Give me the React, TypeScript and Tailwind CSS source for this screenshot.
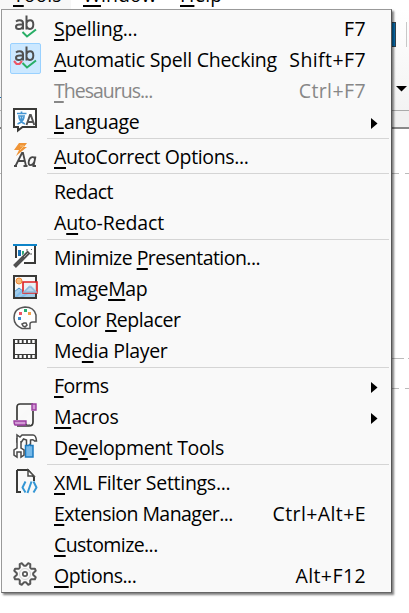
import React from "react";

type Item = {
  pre?: string;
  key?: string;
  post?: string;
  shortcut?: string;
  sub?: boolean;
  disabled?: boolean;
  active?: boolean;
  icon?: React.ReactNode;
  track: string;
};

function Icon({ children }: { children: React.ReactNode }) {
  return (
    <svg width="24" height="24" viewBox="0 0 24 24" fill="none" className="block overflow-visible">
      {children}
    </svg>
  );
}

const Ab = ({ wavy }: { wavy?: boolean }) => (
  <Icon>
    <g stroke="#505050" strokeWidth="2">
      <path d="M3 6.5q1.500-1.200 3.700-1.200 3.300 0 3.300 3V14.500M10 9.500H7q-4 0-4 2.300 0 2.200 2.600 2.200 4.400 0 4.400-3.800" />
      <path d="M13.500 .5v14M13.500 8q1-2.700 3.600-2.700 3.200 0 3.200 4.300t-3.300 4.400Q14.500 14 13.500 11" />
    </g>
    {wavy && <path d="M1 15l2.500 3h3L9 15" stroke="#ed5565" strokeWidth="2" />}
    <path d="M9.500 17l4.500 4.500 9-7" stroke="#28ae66" strokeWidth="2" />
  </Icon>
);

const Language = () => (
  <Icon>
    <path d="M1 1h22v18H9.500L5 22.500V19H1z" fill="#fff" stroke="#3a3a38" strokeWidth="2" />
    <path d="M4 5.500h9.500M8.500 3.500v2M5 8h7M6 9q1 5 6 7M11 9q-1 5-6.500 7M8.500 8v7" stroke="#4595d1" strokeWidth="1.700" />
    <path d="M13.500 17l3.500-10h.8l3.500 10M14.500 14h6" stroke="#555" strokeWidth="2" />
  </Icon>
);

const AutoCorrect = () => (
  <Icon>
    <path d="M6 0h8l-3 4h3L3 13l3-6H1z" fill="#ef9437" />
    <path d="M7 3h4L7 7" stroke="#fac27b" />
    <path d="M1 23h3M2.500 23L9 10h1l3 13M5 18h7M10.500 23h4" stroke="#484848" strokeWidth="1.800" />
    <path d="M22.500 13.500L20.500 23h2.500M21.700 15q-1-1-2.500-.8-2.700.5-3.400 4-.7 4 1.700 4 2.500 0 3.700-3" stroke="#484848" strokeWidth="1.800" />
  </Icon>
);

const Presentation = () => (
  <Icon>
    <path d="M2 2h20v17H2z" fill="#fff" />
    <path d="M3 14V2M22 2v17H11" stroke="#3a3a38" strokeWidth="2" />
    <path d="M0 0h24v2H0z" fill="#0e84c8" />
    <path d="M5 6h3v6H5z" fill="#1871b7" />
    <path d="M9 7h2v4H9z" fill="#30a878" />
    <path d="M14 5l1 1-1 1-1-1zM18 9l1 1-1 1-1-1zM18 5h1v1h-1z" fill="#555" />
    <path d="M16 8L1.500 22.500" stroke="#fafafa" strokeWidth="5" />
    <path d="M16 8L1.500 22.500" stroke="#505050" strokeWidth="4" />
    <path d="M15 9l-4 4" stroke="#aaa" />
  </Icon>
);

const ImageMap = () => (
  <Icon>
    <path d="M1 1h22v22H1z" fill="#fafafa" />
    <circle cx="6" cy="6" r="3" fill="#f6bc7d" stroke="#ed8733" />
    <path d="M1 17l5-4 5 4 6-7 6 5v8H1z" fill="#a1cdec" stroke="#438fc8" />
    <path d="M2 23l8-8M7 23L23 13v10z" stroke="#83beec" strokeWidth="2" />
    <path d="M1 1h22v22H1z" stroke="#3a3a38" strokeWidth="2" />
    <path d="M10 7h14v11H10z" fill="#e8eef2" fillOpacity=".85" stroke="#df2020" strokeWidth="1.600" />
    <path d="M11 17l5-5h2l5 5z" fill="#b9d6ea" stroke="#8ebbdc" strokeWidth="1.500" />
  </Icon>
);

const Palette = () => (
  <Icon>
    <path d="M17 22.500V18q0-2 3-2h3V9Q21 1 12 1 1 2 1 12q0 7 8 10.500z" fill="#fff" stroke="#555" strokeWidth="1.500" />
    <path d="M11 3h3v3h-3z" fill="#28ae72" />
    <path d="M6 6h3v3H6z" fill="#ed5565" />
    <path d="M15 6h3v3h-3z" fill="#f5a14c" />
    <path d="M5 11h3v3H5z" fill="#388bce" />
    <path d="M10 20l-1-2 2-1h2l1 2-2 2z" stroke="#555" strokeWidth="1.500" />
  </Icon>
);

const Film = () => (
  <Icon>
    <path d="M0 2h24v20H0z" fill="#3a3a38" />
    <path d="M2 7h20v10H2z" fill="#fafafa" />
    <path d="M2 4.500h20M2 19.500h20" stroke="#fff" strokeWidth="3" strokeDasharray="2.500 1.800" />
  </Icon>
);

const Macro = () => (
  <Icon>
    <path d="M4 17V4q0-3 3-3h13M20 8v11q0 4-4 4H4" fill="#fafafa" stroke="#3a3a38" strokeWidth="1.700" />
    <path d="M19 1h4v6h-4zM1 18h12v4H2q-1-1-1-4z" fill="#d29ad5" stroke="#9a3ca0" strokeWidth="1.400" />
    <path d="M13 21q1 2 4 1" stroke="#555" strokeWidth="1.500" />
  </Icon>
);

const Tools = () => (
  <Icon>
    <path d="M4 4V1l3 2 2-2h11q3 0 3.500 6h-2q-1-2-4-1v6h-4V6l-3-1-2 3H4z" fill="#fff" stroke="#4a4a4a" strokeWidth="1.500" />
    <path d="M12.500 11.500h3l1-1 1 1H20V23h-7.500z" fill="#76b9e9" stroke="#1c7bc1" strokeWidth="1.500" />
    <path d="M4 4v10l-3 2v5l3 2v-5h4v5l3-2v-5l-3-2V7" fill="#fff" stroke="#4a4a4a" strokeWidth="1.500" />
  </Icon>
);

const Xml = () => (
  <Icon>
    <path d="M4 1h11l6 7v4M4 1v22h4" stroke="#3a3a38" strokeWidth="2" />
    <path d="M15 1v6h6z" fill="#fff" stroke="#4b4b49" strokeWidth="1.500" />
    <path d="M12.500 12.500l-3 6 3 5M20.500 12.500l3 6-3 5M18.500 12.500L14.500 24" stroke="#3597d5" strokeWidth="2" strokeLinejoin="round" />
  </Icon>
);

const teeth = Array.from({ length: 32 }, (_, i) => {
  const angle = ((i * 11.25 + 5.6) * Math.PI) / 180;
  const radius = i % 4 === 1 || i % 4 === 2 ? 11.2 : 8.2;
  return `${(12 + radius * Math.sin(angle)).toFixed(2)} ${(12 - radius * Math.cos(angle)).toFixed(2)}`;
});

const Gear = () => (
  <Icon>
    <path d={`M${teeth.join("L")}z`} stroke="#585858" strokeWidth="2" strokeLinejoin="round" />
    <circle cx="12" cy="12" r="5.500" stroke="#d4d4d4" />
    <circle cx="12" cy="12" r="2.200" stroke="#585858" strokeWidth="1.700" />
  </Icon>
);

const groups: Item[][] = [
  [
    { key: "S", post: "pelling...", shortcut: "F7", icon: <Ab />, track: "tracking-[-0.27px]" },
    { key: "A", post: "utomatic Spell Checking", shortcut: "Shift+F7", active: true, icon: <Ab wavy />, track: "tracking-[-0.25px]" },
    { key: "T", post: "hesaurus...", shortcut: "Ctrl+F7", disabled: true, track: "tracking-[-1px]" },
    { key: "L", post: "anguage", sub: true, icon: <Language />, track: "tracking-[-0.3px]" },
  ],
  [{ key: "A", post: "utoCorrect Options...", icon: <AutoCorrect />, track: "tracking-[-0.37px]" }],
  [
    { pre: "Redact", track: "tracking-[-0.5px]" },
    { pre: "A", key: "u", post: "to-Redact", track: "tracking-[-0.1px]" },
  ],
  [
    { pre: "Minimize ", key: "P", post: "resentation...", icon: <Presentation />, track: "tracking-[-0.54px]" },
    { pre: "Image", key: "M", post: "ap", icon: <ImageMap />, track: "tracking-[-0.35px]" },
    { pre: "Color ", key: "R", post: "eplacer", icon: <Palette />, track: "tracking-[-0.43px]" },
    { pre: "Me", key: "d", post: "ia Player", icon: <Film />, track: "tracking-[-0.33px]" },
  ],
  [
    { key: "F", post: "orms", sub: true, track: "tracking-[-0.5px]" },
    { key: "M", post: "acros", sub: true, icon: <Macro />, track: "tracking-[-0.4px]" },
    { pre: "De", key: "v", post: "elopment Tools", icon: <Tools />, track: "tracking-[-0.35px]" },
  ],
  [
    { key: "X", post: "ML Filter Settings...", icon: <Xml />, track: "tracking-[-0.28px]" },
    { key: "E", post: "xtension Manager...", shortcut: "Ctrl+Alt+E", track: "tracking-[-0.55px]" },
    { key: "C", post: "ustomize...", track: "tracking-[-0.58px]" },
    { key: "O", post: "ptions...", shortcut: "Alt+F12", icon: <Gear />, track: "tracking-[-0.5px]" },
  ],
];

function Key({ children }: { children?: React.ReactNode }) {
  return <span className="underline decoration-2 underline-offset-[3px] [text-decoration-skip-ink:none]">{children}</span>;
}

function Row({ item }: { item: Item }) {
  return (
    <div className={`flex h-[31px] items-start ${item.disabled ? "text-[#878787]" : "text-black"}`}>
      <div className="flex w-[52px] shrink-0 pl-2">
        {item.icon && (
          <div
            className={`-mt-[2px] flex size-[31px] items-start rounded-[2px] border pl-[2px] pt-[2px] ${
              item.active ? "border-[#99d1ff] bg-[#cce8ff]" : "border-transparent"
            }`}
          >
            {item.icon}
          </div>
        )}
      </div>
      <div className={`whitespace-pre leading-[29px] ${item.track}`}>
        {item.pre}
        <Key>{item.key}</Key>
        {item.post}
      </div>
      {item.shortcut && (
        <div className="ml-auto mr-[25px] whitespace-pre leading-[29px] tracking-[0.4px]">{item.shortcut}</div>
      )}
      {item.sub && (
        <svg width="7" height="11" viewBox="0 0 7 11" className="ml-auto mr-[13px] mt-[11px]">
          <path d="M0 0l6.500 5.500L0 11z" fill="#000" />
        </svg>
      )}
    </div>
  );
}

export default function App() {
  return (
    <div className="relative h-[613px] w-[409px] overflow-hidden bg-white font-['Open_Sans','Noto_Sans',sans-serif] text-[19.5px] text-black">
      <div className="flex h-[9px] items-end bg-white leading-[28px]">
        <div className="flex h-[9px] w-[71px] items-end bg-[#f7f7f7] pl-[13px]">
          <span><Key>T</Key>ools</span>
        </div>
        <span className="ml-3 w-[97px]"><Key>W</Key>indow</span>
        <span><Key>H</Key>elp</span>
      </div>
      <div className="flex h-[102px] justify-between border-b border-[#aaa] bg-gradient-to-b from-white to-[#f3f3f3]">
        <div className="mt-[88px] h-px w-px bg-[#1871b7]" />
        <div className="flex w-[18px] flex-col">
          <div className="mt-[13px] flex h-[25px]">
            <div className="w-[5px] border-y border-r border-[#34434e] bg-[#0876bc]" />
            <div className="ml-[10px] w-px bg-[#c8c8c8]" />
          </div>
          <svg width="11" height="6" className="ml-[5px] mt-[39px]">
            <path d="M0 0h11L5.500 5.500z" />
          </svg>
        </div>
      </div>
      <div className="h-[18px] border-b-2 border-[#888] bg-[#f0f0f0]" />
      <div className="mt-[44px] flex justify-between">
        <div className="h-px w-px bg-[#bbb]" />
        <div className="flex gap-[6px]">
          <div className="h-px w-[8px] bg-[#bbb]" />
          <div className="h-px w-[4px] bg-[#bbb]" />
        </div>
      </div>
      <div className="mt-[184px] flex justify-end gap-1">
        <div className="h-px w-[13px] bg-[#bbb]" />
        <div className="h-px w-px bg-[#bbb]" />
      </div>
      <div className="mt-[29px] flex justify-end gap-[6px]">
        <div className="h-px w-[8px] bg-[#bbb]" />
        <div className="h-px w-[4px] bg-[#bbb]" />
      </div>
      <div className="absolute left-px top-[9px] h-[584px] w-[391px] border border-b-[#666] border-l-[#999] border-r-[#555] border-t-[#999] bg-[#f9f9f9] pt-1 shadow-[2px_2px_2px_rgba(0,0,0,0.5)]">
        {groups.map((group, i) => (
          <React.Fragment key={i}>
            {i > 0 && <div className="mb-[3px] ml-[45px] mr-[2px] h-px bg-[#d5d5d5]" />}
            {group.map((item, j) => (
              <Row item={item} key={j} />
            ))}
          </React.Fragment>
        ))}
      </div>
    </div>
  );
}
